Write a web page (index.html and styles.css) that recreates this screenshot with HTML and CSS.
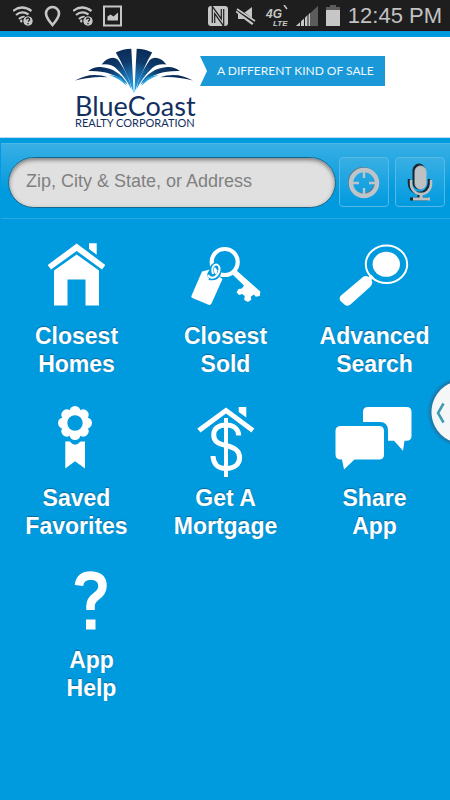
FILE: index.html
```html
<!DOCTYPE html>
<html lang="en">
<head>
<meta charset="utf-8">
<meta name="viewport" content="width=device-width, initial-scale=1">
<title>BlueCoast Realty Corporation</title>
<link rel="stylesheet" href="styles.css">
</head>
<body>
<div class="status">
  <svg class="s-icon" viewBox="0 0 20 22"><g fill="none" stroke="#c6c6c6" stroke-width="2.200"><path d="M0 6Q9-1 18.500 6"/><path d="M3 10Q9 5 15.500 9.500"/><path d="M6 14Q9 11 12 12"/></g><circle cx="8.500" cy="16" r="1.500" fill="#c6c6c6"/><circle cx="15" cy="16" r="5.200" fill="#c6c6c6" stroke="#1e1e1e"/><path d="M13.300 14.500Q13.500 13 15 13Q16.800 13 16.600 14.600Q16.300 15.600 15 16.500M15 18v1.300" fill="none" stroke="#1e1e1e" stroke-width="1.300"/></svg>
  <svg class="s-icon" viewBox="0 0 20 22"><path d="M9.500 20Q3 12.500 3 8.500A6.500 6.500 0 0 1 16 8.500Q16 12.500 9.500 20Z" fill="none" stroke="#c6c6c6" stroke-width="2.600"/></svg>
  <svg class="s-icon" viewBox="0 0 20 22"><g fill="none" stroke="#c6c6c6" stroke-width="2.200"><path d="M0 6Q9-1 18.500 6"/><path d="M3 10Q9 5 15.500 9.500"/><path d="M6 14Q9 11 12 12"/></g><circle cx="8.500" cy="16" r="1.500" fill="#c6c6c6"/><circle cx="15" cy="16" r="5.200" fill="#c6c6c6" stroke="#1e1e1e"/><path d="M13.300 14.500Q13.500 13 15 13Q16.800 13 16.600 14.600Q16.300 15.600 15 16.500M15 18v1.300" fill="none" stroke="#1e1e1e" stroke-width="1.300"/></svg>
  <svg class="s-icon" viewBox="0 0 20 22"><path d="M1 1.500h17v19H1z" fill="none" stroke="#c6c6c6" stroke-width="2"/><path d="M4.500 15.500v-4l3-2 3 2 4.500-4v8z" fill="#c6c6c6"/></svg>
  <span class="spacer"></span>
  <svg class="s-icon" viewBox="0 0 20 22"><rect y="1" width="20" height="20" rx="3" fill="#c6c6c6"/><path d="M5.500 18V5L14.500 17.500V4" fill="none" stroke="#1e1e1e" stroke-width="3.600"/><path d="M5.500 19V5L14.500 17.500V3" fill="none" stroke="#c6c6c6" stroke-width="1.200"/></svg>
  <svg class="s-icon" viewBox="0 0 20 22"><path d="M2 8h6l8-6v18l-8-6H2z" fill="#c6c6c6"/><path d="M0 3.500L19 18" stroke="#1e1e1e" stroke-width="4"/><path d="M1 4l18 12M0 6.500L17 19" stroke="#c6c6c6" stroke-width="1.600"/></svg>
  <svg class="s-icon s-4g" viewBox="0 0 24 22"><text x="2" y="13" class="t-4g">4G</text><text x="9" y="21" class="t-lte">LTE</text><path d="M20 0l3 4" stroke="#c6c6c6" stroke-width="1.500"/></svg>
  <svg class="s-icon s-signal" viewBox="0 0 22 22"><path d="M22 1v20H0z" fill="#5c5c5c"/><path d="M14 8v13H0z" fill="#c6c6c6"/><path d="M4.500 15v7M8.500 11v11M12 8v14" stroke="#1e1e1e"/></svg>
  <svg class="s-icon s-battery" viewBox="0 0 14 22"><path d="M4 0h6v2h4v4H0V2h4z" fill="#5c5c5c"/><path d="M0 5h14v16H0z" fill="#c6c6c6"/></svg>
  <span class="clock">12:45 PM</span>
</div>

<header class="header">
  <div class="logo">
    <svg class="fan" viewBox="47 24 350 140" preserveAspectRatio="none">
      <defs>
        <radialGradient id="sea" gradientUnits="userSpaceOnUse" cx="222" cy="160" r="140"><stop offset="0" stop-color="#22b3f0"/><stop offset=".35" stop-color="#1b78b8"/><stop offset=".68" stop-color="#0d3a6b"/><stop offset="1" stop-color="#0a2a55"/></radialGradient>
        <g id="wing">
          <path d="M168 38Q188 26 214 26Q217 80 221 162Q208 118 191 83Q181 60 168 38Z"/>
          <path d="M126 74Q140 54 160 54Q173 55 180 68Q207 108 215 150Q194 110 173 90Q157 71 126 74Z"/>
          <path d="M86 94Q104 80 124 82Q153 85 168 96Q193 111 203 136Q178 111 150 102Q125 93 86 94Z"/>
          <path d="M47 123Q76 106 105 106Q128 106 144 113Q98 109 47 123Z"/>
          <path d="M148 106Q188 106 200 139Q180 117 148 106Z" fill="#239fdf"/>
        </g>
      </defs>
      <g fill="url(#sea)"><use href="#wing"/><use href="#wing" transform="translate(444 0) scale(-1 1)"/></g>
    </svg>
    <div class="brand">BlueCoast</div>
    <div class="sub">REALTY CORPORATION</div>
  </div>
  <div class="ribbon">A DIFFERENT KIND OF SALE</div>
</header>

<main>
<form class="search">
  <input class="field" type="text" aria-label="Location" placeholder="Zip, City &amp; State, or Address">
  <button class="tool" type="button" aria-label="Use my location">
    <svg width="34" height="34" viewBox="0 0 34 34"><circle cx="16" cy="17" r="13" fill="none" stroke="#637985" stroke-width="4"/><g fill="none" stroke="#bdc5ca"><circle cx="17" cy="18" r="13" stroke-width="4.500"/><path d="M17 7v6M17 23v6M6 18h6M22 18h6" stroke-width="2.400"/></g></svg>
  </button>
  <button class="tool" type="button" aria-label="Voice search">
    <svg width="34" height="40" viewBox="0 0 34 40"><g transform="translate(-2 -1)" fill="none" stroke="#152532"><rect x="12" y="3" width="12" height="25" rx="6" fill="#152532"/><path d="M8 18v4a10 10 0 0 0 20 0v-4" stroke-width="2.500"/><path d="M18 32v6M9 38h18" stroke-width="3"/></g><g fill="none" stroke="#bdc1c4"><rect x="12" y="4" width="11" height="23" rx="5.500" fill="#bdc1c4"/><path d="M8 18v4a10 10 0 0 0 20 0v-4" stroke-width="2.500"/><path d="M18 32v5M10 37h17" stroke-width="3"/></g></svg>
  </button>
</form>

<nav class="grid">
  <a class="tile" href="#homes">
    <svg class="icon" viewBox="37 240 80 76"><path d="M76.700 243.500L105.300 265 102 269.500 76.700 251 51 269.500 47.700 265ZM89 243.300h7.700v11.500l-7.700-5.800ZM76.700 254.500L99 270.500v35H85.500V279.500H67.500v26H54v-35Z"/></svg>
    <span>Closest<br>Homes</span>
  </a>
  <a class="tile" href="#sold">
    <svg class="icon" viewBox="186 240 80 76"><circle cx="224.700" cy="262" r="13" fill="none" stroke="#fff" stroke-width="4.200"/><path d="M232 274l4-4 24.300 21.500-.5 4.500-4 .8-2-2.300-3 2.200.5 3-3.300 2.300-3.800-2 .5-4-2.500-2-3 1-2.700-2.500 2-3.500 3.500-.5 2-3Z"/><path d="M202 271.500l8-2Q205 275 208.500 278Q215 280 219 276.500l3.500 2.500-11 24.500q-1 2-3 1.200l-15.500-6.500q-2.500-1-1.300-3Z"/><path d="M209 278Q218 280 219.500 271Q220 264.500 215.500 264.500Q210 266 212.500 274" fill="none" stroke="#009adf" stroke-width="4"/><path d="M208 275Q210 279 215 277Q220 273 219.500 268Q218.500 263.500 214.500 265Q211 267.500 213 274" fill="none" stroke="#fff" stroke-width="2"/></svg>
    <span>Closest<br>Sold</span>
  </a>
  <a class="tile" href="#search">
    <svg class="icon" viewBox="335 240 80 76"><ellipse cx="386.500" cy="264.300" rx="20.700" ry="18.700" fill="none" stroke="#fff" stroke-width="2"/><ellipse cx="386.300" cy="264.300" rx="13.700" ry="12.500"/><path d="M363.500 276.500Q367 275 370 278L372 281Q373 284 370 287L351 304Q348 307 345 305L340.500 301Q338.500 298 341 295.500Z"/><path d="M369.500 279l3-3" fill="none" stroke="#fff" stroke-width="4"/></svg>
    <span>Advanced<br>Search</span>
  </a>
  <a class="tile" href="#saved">
    <svg class="icon" viewBox="37 402 80 76"><g><circle cx="75" cy="411.500" r="5.500"/><circle cx="83.200" cy="414.800" r="5.500"/><circle cx="86.500" cy="423" r="5.500"/><circle cx="83.200" cy="431.200" r="5.500"/><circle cx="75" cy="434.500" r="5.500"/><circle cx="66.800" cy="431.200" r="5.500"/><circle cx="63.500" cy="423" r="5.500"/><circle cx="66.800" cy="414.800" r="5.500"/><circle cx="75" cy="423" r="13"/></g><circle cx="75" cy="423" r="7.700" fill="#009adf"/><path d="M65.300 441.500h4.500Q75 448 80.500 441.500H85v27L75 461.300 65.300 468.500Z"/></svg>
    <span>Saved<br>Favorites</span>
  </a>
  <a class="tile" href="#mortgage">
    <svg class="icon" viewBox="186 402 80 76"><path d="M226 407.500L254.300 428.500 251.500 432.500 226 413.500 200.500 432.500 197.300 428.500ZM238.700 407h7.600v10.500l-7.600-5.500Z"/><path d="M226 418v59" fill="none" stroke="#fff" stroke-width="4"/><path d="M238.700 435.500C238.500 428.500 233 425 226 425C218 425 213.700 429 213.700 435C213.700 442 219 443.800 226 445.500C234.500 447.500 239.600 450.500 239.600 457.500C239.600 464.500 234 468.500 226 468.500C218 468.500 213.200 464 213 456" fill="none" stroke="#fff" stroke-width="5"/></svg>
    <span>Get A<br>Mortgage</span>
  </a>
  <a class="tile" href="#share">
    <svg class="icon" viewBox="335 402 80 76"><path d="M363 422v-10q0-5 5-5h38.500q5 0 5 5v24q0 4.700-5 4.700h-2l-1.500 10-9-10h-6v-10q0-8.700-8-8.700Z"/><path d="M341 426h38q5 0 5 5v23.500q0 5-5 5h-24.500L344 469.500l-2-10h-1q-5.500 0-5.500-5V431q0-5 5.500-5Z"/></svg>
    <span>Share<br>App</span>
  </a>
  <a class="tile help" href="#help">
    <svg class="icon" viewBox="52 564 80 76"><path d="M79 585.500Q80 575.500 91 575.500Q102.500 576 102.500 586Q102.500 592 96 596.500Q90.500 600.500 90.500 606v4" fill="none" stroke="#fff" stroke-width="8.500"/><path d="M86 619.500h9.500v10H86z"/></svg>
    <span>App<br>Help</span>
  </a>
</nav>
</main>
<button class="drawer" type="button" aria-label="Open panel"><svg width="10" height="22" viewBox="0 0 10 22"><path d="M7.500 1.500L2 11l5.500 9.500" fill="none" stroke="#3b9bb3" stroke-width="2.500"/></svg></button>
</body>
</html>
```
FILE: styles.css
```css
* { box-sizing: border-box; }

body {
  position: relative;
  min-height: 100vh;
  margin: 0;
  background: #009adf;
  font-family: "Liberation Sans", Arial, sans-serif;
}

.status {
  display: flex;
  align-items: center;
  gap: 10px;
  height: 31px;
  padding: 2px 8px 0 13px;
  border-bottom: 1px solid #2a1210;
  background: #1e1e1e;
}
.s-icon { flex: none; width: 20px; height: 22px; }
.s-4g { width: 24px; }
.s-signal { width: 22px; }
.s-battery { width: 14px; }
.spacer { flex: 1; }
.spacer ~ * { margin-left: -2px; }
.t-4g { font: italic bold 12px "Liberation Sans", sans-serif; fill: #c6c6c6; }
.t-lte { font: italic bold 8px "Liberation Sans", sans-serif; fill: #c6c6c6; }
.clock { color: #c2c2c2; font-size: 22px; line-height: 28px; white-space: nowrap; }

.header {
  display: flex;
  align-items: flex-start;
  gap: 7px;
  height: 101px;
  margin-top: 6px;
  padding: 11px 65px 0 75px;
  border-bottom: 1px solid #b9dcf0;
  background: #fff;
}
.logo { width: 118px; color: #12305f; }
.fan { display: block; width: 118px; height: 46px; }
.brand {
  font: 27px/23px Lato, sans-serif;
  white-space: nowrap;
}
.sub {
  font: 11px/12px Lato, sans-serif;
  white-space: nowrap;
}
.ribbon {
  flex: 1;
  margin-top: 8px;
  padding-left: 17px;
  background: #1b98d8;
  clip-path: polygon(0 0, 100% 0, 100% 100%, 0 100%, 7px 50%);
  color: #eef8fd;
  font: 12px/30px Lato, sans-serif;
  white-space: nowrap;
}

.search {
  display: flex;
  height: 76px;
  margin: 5px 0 0 1px;
  padding: 13px 5px 0 7px;
  border-top: 1px solid #4cb8e8;
  border-bottom: 1px solid #2ba9e3;
  background: linear-gradient(#38afe4, #009adf 65%);
}
.field {
  flex: 1;
  min-width: 0;
  height: 51px;
  margin-right: 3px;
  padding: 0 17px 2px;
  border: 1px solid #14688f;
  border-radius: 26px;
  outline: 0;
  background: #e0e0e0;
  box-shadow: inset 0 2px 4px #777;
  font: 18px "Liberation Sans", Arial, sans-serif;
}
.field::placeholder { color: #808080; opacity: 1; }
.tool {
  display: grid;
  place-items: center;
  width: 50px;
  height: 50px;
  padding: 0;
  border: 1px solid #55b9e4;
  border-radius: 4px;
  background: linear-gradient(#38afe4, #009adf);
}
.tool + .tool { margin-left: 6px; }

.grid {
  display: grid;
  grid-template-columns: repeat(3, 1fr);
  gap: 24px 0;
  padding: 21px 1px 24px 2px;
}
.tile {
  display: flex;
  flex-direction: column;
  align-items: center;
  gap: 6px;
  color: #fff;
  font-size: 23px;
  font-weight: bold;
  line-height: 28px;
  text-align: center;
  text-decoration: none;
  text-shadow: 0 -1px 1px #0a6a9a;
}
.help { padding-left: 30px; }
.icon { width: 80px; height: 76px; fill: #fff; }

/* Edge handle: the visible slice of a 64px disc with a soft rim shadow */
.drawer {
  position: absolute;
  top: 376px;
  right: 0;
  width: 24px;
  height: 74px;
  padding: 0 0 0 10px;
  border: 0;
  background: radial-gradient(circle at 37px 36px, #f4f6f7 31px, #1c76a6 32px, #009adf00 36px);
  text-align: left;
}
.drawer svg { display: block; }
```
